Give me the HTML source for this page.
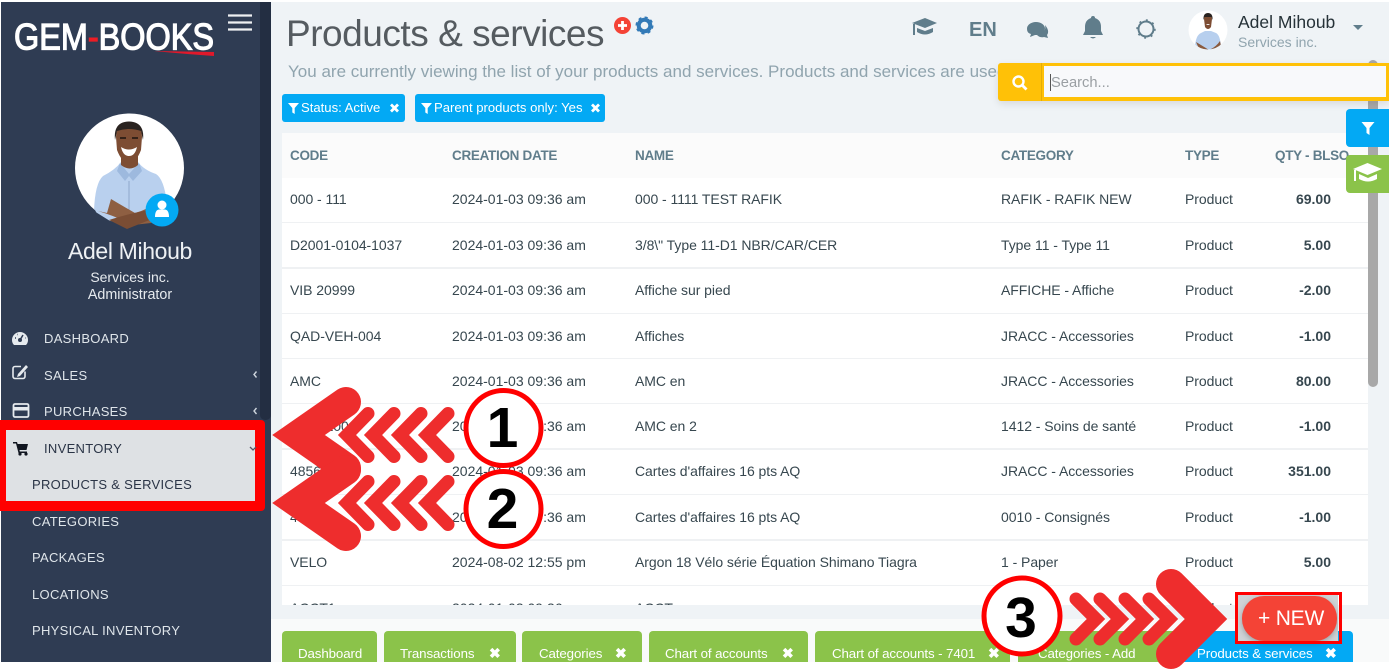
<!DOCTYPE html>
<html><head><meta charset="utf-8"><style>
html,body{margin:0;padding:0;background:#fff;width:1389px;height:669px;overflow:hidden}
body{position:relative;font-family:"Liberation Sans",sans-serif;font-size:14px;color:#37474f}
.a{position:absolute}
.t{position:absolute;white-space:nowrap;line-height:16px}
.m{position:absolute;white-space:nowrap;line-height:16px;font-size:13px;letter-spacing:.3px;color:#dfe5ea}
.h{position:absolute;top:148px;line-height:16px;font-size:13.5px;letter-spacing:-.3px;font-weight:bold;color:#607d8b;white-space:nowrap}
.tab{position:absolute;top:631px;height:31px;background:#8bc34a;border-radius:4px 4px 0 0;color:#fff;line-height:45px;overflow:hidden;white-space:nowrap;font-size:13.3px;letter-spacing:-.1px}
.tab span{position:absolute;top:0}
.tab b{position:absolute;top:0;font-size:14px}
.row{position:absolute;left:0;width:1086px;height:44px;background:#fff;border-bottom:2px solid #eff1f3}
.row span{position:absolute;top:14px;white-space:nowrap;line-height:16px;letter-spacing:-.05px}
.row.u span{top:13px}
.row .c2{letter-spacing:0}
.c1{left:8px}.c2{left:170px}.c3{left:353px}.c4{left:719px}.c5{left:903px}
.row .c6{right:37px;font-weight:bold;letter-spacing:0}
svg{position:absolute;overflow:visible}
</style></head><body>

<div class="a" style="left:1px;top:2px;width:270px;height:660px;background:#2f3c53"></div>
<div class="a" style="left:260px;top:2px;width:11px;height:418px;background:#232e42;border-radius:0 0 5px 5px"></div>
<div class="a" style="left:271px;top:2px;width:1118px;height:617px;background:#eff3f6"></div>
<div class="a" style="left:271px;top:619px;width:1118px;height:43px;background:#f9fafa"></div>

<svg style="left:0;top:0" width="271" height="110">
<text x="14" y="49.500" font-family="Liberation Sans" font-size="37" fill="#fff" stroke="#fff" stroke-width="1.200" textLength="200" lengthAdjust="spacingAndGlyphs">GEM<tspan fill="#ee1c25" stroke="#ee1c25">-</tspan>BOOKS</text>
<path d="M154 51 L214 52 L214 56 Q185 54 154 51Z" fill="#e0192b"/>
<path d="M228 15.500H252M228 22.500H252M228 29.500H252" stroke="#eef0f2" stroke-width="2.200"/>
</svg>

<svg style="left:75px;top:113px" width="110" height="116" viewBox="0 0 110 116">
<defs><clipPath id="c1"><path d="M0 55a54.500 54.500 0 0 1 109 0a54.500 54.500 0 0 1-20 42L80 116H30L20 97A54.500 54.500 0 0 1 0 55Z"/></clipPath></defs>
<circle cx="54.500" cy="55" r="54.500" fill="#fff"/>
<g clip-path="url(#c1)">
<path d="M19 98Q20 70 28 63Q40 57 46 49L63 49Q69 57 81 61Q89 66 92 90L88 100L70 110L35 108Z" fill="#b9d0ee"/>
<path d="M45 50L54 61L64 50L67 58L58 68L54 63L50 68L42 58Z" fill="#9db9de"/>
<path d="M54 68v34" stroke="#8ea8cc" stroke-width="1"/>
<path d="M23 98Q40 103 58 112L76 110Q88 102 92 90L84 88Q74 96 60 100Q46 92 36 86L32 100Z" fill="#8e5f42"/>
<path d="M34 107Q55 100 80 96L82 104L52 116Z" fill="#7a4d34"/>
<path d="M46 42h17v10q-8 7-17 0Z" fill="#7d4d33"/>
<path d="M41 24Q41 11 54 11Q67 11 67 24L66 37Q61 50 54 50Q47 50 42 37Z" fill="#7d4d33"/>
<path d="M40 27Q38 9 54 8.500Q70 9 68 27L66 18Q54 14 42 18Z" fill="#2a2320"/>
<path d="M46 34Q54 39 62 34Q60 43 54 43Q48 43 46 34Z" fill="#fff"/>
<path d="M45 25h6M57 25h6" stroke="#2a1c15" stroke-width="1.800"/>
</g>
<circle cx="87" cy="97" r="16.500" fill="#03a9f4"/>
<circle cx="87" cy="92" r="4.500" fill="#fff"/>
<path d="M80 104Q80 97 84 96.500H90Q94 97 94 104Z" fill="#fff"/>
</svg>

<div class="t" style="left:1px;width:258px;text-align:center;top:238px;font-size:23px;line-height:26px;color:#eef1f4;letter-spacing:-.35px">Adel Mihoub</div>
<div class="t" style="left:1px;width:258px;text-align:center;top:269px;font-size:14px;color:#e6eaee">Services inc.</div>
<div class="t" style="left:1px;width:258px;text-align:center;top:287px;font-size:14.300px;color:#e6eaee">Administrator</div>

<div class="m" style="left:44px;top:331px">DASHBOARD</div>
<div class="m" style="left:44px;top:368px">SALES</div>
<div class="m" style="left:44px;top:404px">PURCHASES</div>
<svg style="left:0;top:325px" width="271" height="100" fill="#e6eaee">
<path d="M12 15a8 8 0 0 1 16 0q0 3-2 5H14q-2-2-2-5Z"/><circle cx="20" cy="15" r="2" fill="#2f3c53"/><path d="M20 15l3-5M15 13h1M25 13h.5M17 9.500h.5" stroke="#2f3c53" stroke-width="1.500"/>
<path d="M25 46.500v5a2 2 0 0 1-2 2H15a2 2 0 0 1-2-2v-8a2 2 0 0 1 2-2h6" fill="none" stroke="#e6eaee" stroke-width="1.600"/><path d="M18 49l8-9 2 2-8 9-3 1Z"/>
<rect x="13.500" y="79" width="15" height="13" rx="1.500" fill="none" stroke="#e6eaee" stroke-width="1.800"/><rect x="13.500" y="82" width="15" height="3.500"/>
<path d="M256.500 46.500l-2.500 3 2.500 3M256.500 83l-2.500 3 2.500 3" fill="none" stroke="#cfd6de" stroke-width="1.400"/>
</svg>

<div class="a" style="left:0;top:420px;width:265px;height:91px;background:#f00;border-radius:0 4px 4px 0"></div>
<div class="a" style="left:6px;top:430px;width:249px;height:71px;background:#dee1e4"></div>
<div class="m" style="left:44px;top:441px;color:#2a3446">INVENTORY</div>
<div class="m" style="left:32px;top:477px;color:#2a3446">PRODUCTS &amp; SERVICES</div>
<svg style="left:0;top:430px" width="265" height="40">
<path d="M13 12h4l.6 2H28l-1.500 6H19.500l.3 1.500H27v1.500H18.500L16 13.500H13Z" fill="#10151f"/><circle cx="20" cy="24" r="1.600" fill="#10151f"/><circle cx="26" cy="24" r="1.600" fill="#10151f"/>
<path d="M250 17l3 3 3-3" fill="none" stroke="#556" stroke-width="1.300"/>
</svg>
<div class="m" style="left:32px;top:514px">CATEGORIES</div>
<div class="m" style="left:32px;top:550px">PACKAGES</div>
<div class="m" style="left:32px;top:587px">LOCATIONS</div>
<div class="m" style="left:32px;top:623px">PHYSICAL INVENTORY</div>

<div class="t" style="left:286px;top:12px;font-size:37px;line-height:44px;letter-spacing:-.47px;color:#555b60">Products &amp; services</div>
<svg style="left:613px;top:16px" width="42" height="22">
<circle cx="9.500" cy="9.500" r="8.500" fill="#f44336"/><path d="M9.500 5v9M5 9.500h9" stroke="#fff" stroke-width="2.800"/>
<circle cx="31.500" cy="9.500" r="5.800" fill="none" stroke="#337ab7" stroke-width="4"/><circle cx="31.500" cy="9.500" r="7.800" fill="none" stroke="#337ab7" stroke-width="2.400" stroke-dasharray="3 3.100"/>
</svg>
<div class="t" style="left:288px;top:62px;width:710px;overflow:hidden;font-size:17px;line-height:20px;color:#90a4ae;letter-spacing:.01px">You are currently viewing the list of your products and services. Products and services are used in your transactions</div>

<div class="a" style="left:282px;top:94px;width:123px;height:28px;background:#03a9f4;border-radius:3px"></div>
<div class="a" style="left:415px;top:94px;width:190px;height:28px;background:#03a9f4;border-radius:3px"></div>
<div class="t" style="left:301px;top:100px;color:#fff;font-size:13.100px">Status: Active</div>
<div class="t" style="left:434px;top:100px;color:#fff;font-size:13.100px">Parent products only: Yes</div>
<svg style="left:282px;top:94px" width="330" height="28" fill="#fff">
<path d="M6 9h11l-4.300 5v6l-2.400-1.500V14Z"/><path d="M139 9h11l-4.300 5v6l-2.400-1.500V14Z"/>
<path d="M109 10.500l7 7M116 10.500l-7 7M310 10.500l7 7M317 10.500l-7 7" stroke="#fff" stroke-width="2.800" fill="none"/>
</svg>

<div class="a" style="left:282px;top:133px;width:1086px;height:45px;background:#fbfbfb"></div>
<div class="h" style="left:290px">CODE</div>
<div class="h" style="left:452px">CREATION DATE</div>
<div class="h" style="left:635px">NAME</div>
<div class="h" style="left:1001px">CATEGORY</div>
<div class="h" style="left:1185px">TYPE</div>
<div class="h" style="left:1275px">QTY - BLSO</div>

<div class="a" style="left:282px;top:178px;width:1086px;height:427px;overflow:hidden">
<div class="row u" style="top:0"><span class="c1">000 - 111</span><span class="c2">2024-01-03 09:36 am</span><span class="c3">000 - 1111 TEST RAFIK</span><span class="c4">RAFIK - RAFIK NEW</span><span class="c5">Product</span><span class="c6">69.00</span></div>
<div class="row" style="top:45px"><span class="c1">D2001-0104-1037</span><span class="c2">2024-01-03 09:36 am</span><span class="c3">3/8\" Type 11-D1 NBR/CAR/CER</span><span class="c4">Type 11 - Type 11</span><span class="c5">Product</span><span class="c6">5.00</span></div>
<div class="row u" style="top:91px"><span class="c1">VIB 20999</span><span class="c2">2024-01-03 09:36 am</span><span class="c3">Affiche sur pied</span><span class="c4">AFFICHE - Affiche</span><span class="c5">Product</span><span class="c6">-2.00</span></div>
<div class="row" style="top:136px"><span class="c1">QAD-VEH-004</span><span class="c2">2024-01-03 09:36 am</span><span class="c3">Affiches</span><span class="c4">JRACC - Accessories</span><span class="c5">Product</span><span class="c6">-1.00</span></div>
<div class="row" style="top:181px"><span class="c1">AMC</span><span class="c2">2024-01-03 09:36 am</span><span class="c3">AMC en</span><span class="c4">JRACC - Accessories</span><span class="c5">Product</span><span class="c6">80.00</span></div>
<div class="row" style="top:226px"><span class="c1">AMC-2000</span><span class="c2">2024-01-03 09:36 am</span><span class="c3">AMC en 2</span><span class="c4">1412 - Soins de santé</span><span class="c5">Product</span><span class="c6">-1.00</span></div>
<div class="row u" style="top:272px"><span class="c1">4856</span><span class="c2">2024-01-03 09:36 am</span><span class="c3">Cartes d'affaires 16 pts AQ</span><span class="c4">JRACC - Accessories</span><span class="c5">Product</span><span class="c6">351.00</span></div>
<div class="row" style="top:317px"><span class="c1">4856-C</span><span class="c2">2024-01-03 09:36 am</span><span class="c3">Cartes d'affaires 16 pts AQ</span><span class="c4">0010 - Consignés</span><span class="c5">Product</span><span class="c6">-1.00</span></div>
<div class="row u" style="top:363px"><span class="c1">VELO</span><span class="c2">2024-08-02 12:55 pm</span><span class="c3">Argon 18 Vélo série Équation Shimano Tiagra</span><span class="c4">1 - Paper</span><span class="c5">Product</span><span class="c6">5.00</span></div>
<div class="row" style="top:408px"><span class="c1">ACCT1</span><span class="c2">2024-01-03 09:36 am</span><span class="c3">ACCT</span><span class="c4">1 - Paper</span><span class="c5">Product</span></div>
</div>

<div class="a" style="left:1368px;top:60px;width:10px;height:327px;background:#a8a8a8;border-radius:5px"></div>

<svg style="left:905px;top:10px" width="270" height="40" fill="#607d8b">
<path d="M7 13L20 8l12 5-12 5Z"/><path d="M12 18v4q8 5 16 0v-4l-8 3Z"/><path d="M9 14v11" stroke="#607d8b" stroke-width="2"/>
<path d="M122 19a9 6.500 0 1 1 8 6l-5 2 1-3q-4-1-4-5Z"/><path d="M140 15q2 7-8 10 3 3 7 2l4 1-1-3q3-4-2-10Z"/>
<path d="M186 8a2 2 0 0 1 4 0q6 2 6 9v4l2 4h-20l2-4v-4q0-7 6-9Z"/><path d="M185 27h6q-3 3-6 0Z"/>
<circle cx="241" cy="19" r="7.500" fill="none" stroke="#607d8b" stroke-width="2"/><circle cx="241" cy="19" r="9" fill="none" stroke="#607d8b" stroke-width="1.400" stroke-dasharray="2 5"/>
</svg>
<div class="t" style="left:969px;top:19px;font-size:20px;line-height:22px;font-weight:bold;color:#607d8b">EN</div>

<svg style="left:1188px;top:10px" width="40" height="42" viewBox="0 0 40 42">
<defs><clipPath id="c2"><circle cx="20" cy="20" r="19.500"/></clipPath></defs>
<circle cx="20" cy="20" r="19.500" fill="#fff"/>
<g clip-path="url(#c2)">
<path d="M7 36Q8 25 13 23L17 21H23L28 23Q32 25 33 36L30 42H10Z" fill="#b7cfee"/>
<path d="M8 32Q18 38 21 40Q28 37 32 31L33 36L24 41H12Z" fill="#8a5a3e"/>
<path d="M16 9Q16 4 20 4Q24 4 24 9L23 17Q20 21 17 17Z" fill="#7d4d33"/>
<path d="M15.500 10Q15 3 20 3Q25 3 24.500 10L23.500 7H16.500Z" fill="#2a2320"/>
<path d="M18 14h4q-2 2-4 0Z" fill="#fff"/>
</g></svg>
<div class="t" style="left:1238px;top:12px;font-size:17.500px;line-height:20px;color:#263238">Adel Mihoub</div>
<div class="t" style="left:1238px;top:34px;font-size:14px;color:#90a4ae">Services inc.</div>
<svg style="left:1353px;top:25px" width="12" height="6"><path d="M0 0h10l-5 5Z" fill="#607d8b"/></svg>

<div class="a" style="left:998px;top:63px;width:391px;height:38px;background:#ffc107;border-radius:3px 0 0 3px;box-shadow:0 3px 8px rgba(0,0,0,.1)"></div>
<div class="a" style="left:1044px;top:66px;width:342px;height:31px;background:#f8f9fb"></div>
<div class="a" style="left:1041px;top:63px;width:1px;height:38px;background:#e5ad05"></div>
<div class="a" style="left:1050px;top:74px;width:1px;height:17px;background:#555"></div>
<div class="t" style="left:1051px;top:75px;font-size:14.700px;color:#9a9fa3">Search...</div>
<svg style="left:1011px;top:74px" width="18" height="18"><circle cx="7.500" cy="7.500" r="5" fill="none" stroke="#fff" stroke-width="2.400"/><path d="M11 11l4.500 4.500" stroke="#fff" stroke-width="2.800"/></svg>

<div class="a" style="left:1346px;top:109px;width:43px;height:38px;background:#03a9f4;border-radius:4px 0 0 4px"></div>
<div class="a" style="left:1346px;top:155px;width:43px;height:38px;background:#8bc34a;border-radius:4px 0 0 4px"></div>
<svg style="left:1346px;top:109px" width="43" height="84" fill="#fff">
<path d="M15.500 13h13l-5 6v7l-3-2v-5Z"/>
<path d="M7 60l14.500-6 14.500 6-14.500 6Z"/><path d="M13 65v5q9 5 18 0v-5l-9 4Z"/><path d="M9 61v11" stroke="#fff" stroke-width="2"/>
</svg>

<div class="tab" style="left:282px;width:95px"><span style="left:16px">Dashboard</span></div>
<div class="tab" style="left:384px;width:132px"><span style="left:16px">Transactions</span><b style="left:105px">✖</b></div>
<div class="tab" style="left:522px;width:120px"><span style="left:17px">Categories</span><b style="left:93px">✖</b></div>
<div class="tab" style="left:649px;width:159px"><span style="left:16px">Chart of accounts</span><b style="left:133px">✖</b></div>
<div class="tab" style="left:815px;width:195px"><span style="left:17px">Chart of accounts - 7401</span><b style="left:173px">✖</b></div>
<div class="tab" style="left:1018px;width:172px"><span style="left:20px">Categories - Add</span><b style="left:150px">✖</b></div>
<div class="tab" style="left:1180px;width:173px;background:#03a9f4"><span style="left:17px">Products &amp; services</span><b style="left:145px">✖</b></div>

<div class="a" style="left:1238px;top:594px;width:100px;height:48px;background:#cfd3d6"></div>
<div class="a" style="left:1242px;top:596px;width:95px;height:45px;background:#f44336;border-radius:22px;box-shadow:0 2px 6px rgba(0,0,0,.25)"></div>
<div class="t" style="left:1258px;top:607px;font-size:21px;line-height:24px;color:#fff;letter-spacing:-.2px">+ NEW</div>
<div class="a" style="left:1235px;top:592px;width:107px;height:52px;box-sizing:border-box;border:3.500px solid #f00"></div>

<svg style="left:0;top:0" width="1389" height="669" fill="none" stroke="#ee2d2d" stroke-linecap="round" stroke-linejoin="miter">
<g stroke-width="13">
<path d="M368 413.500L347 435L368 456.500M394 413.500L373 435L394 456.500M421 413.500L400 435L421 456.500M448 413.500L427 435L448 456.500"/>
<path d="M368 481.500L347 503L368 524.500M394 481.500L373 503L394 524.500M421 481.500L400 503L421 524.500M448 481.500L427 503L448 524.500"/>
<path d="M1076 599L1096 619L1076 639M1100 599L1120 619L1100 639M1125 599L1145 619L1125 639M1149 599L1169 619L1149 639"/>
</g>
<g stroke-width="30">
<path d="M346 402L298.500 435L346 468" stroke-miterlimit="6"/>
<path d="M346 470L298.500 503L346 536" stroke-miterlimit="6"/>
<path d="M1171 584L1206 619L1171 654" stroke-miterlimit="6"/>
</g>
<circle cx="503.500" cy="428" r="37.500" fill="#fff" stroke="#f00" stroke-width="5"/>
<circle cx="503.500" cy="509" r="37.500" fill="#fff" stroke="#f00" stroke-width="5"/>
<circle cx="1022" cy="616" r="38" fill="#fff" stroke="#f00" stroke-width="5"/>
</svg>
<div class="t" style="left:462px;width:81px;text-align:center;top:396px;font-size:57px;line-height:64px;font-weight:bold;color:#000">1</div>
<div class="t" style="left:462px;width:81px;text-align:center;top:477px;font-size:57px;line-height:64px;font-weight:bold;color:#000">2</div>
<div class="t" style="left:981px;width:80px;text-align:center;top:586px;font-size:57px;line-height:64px;font-weight:bold;color:#000">3</div>

</body></html>
